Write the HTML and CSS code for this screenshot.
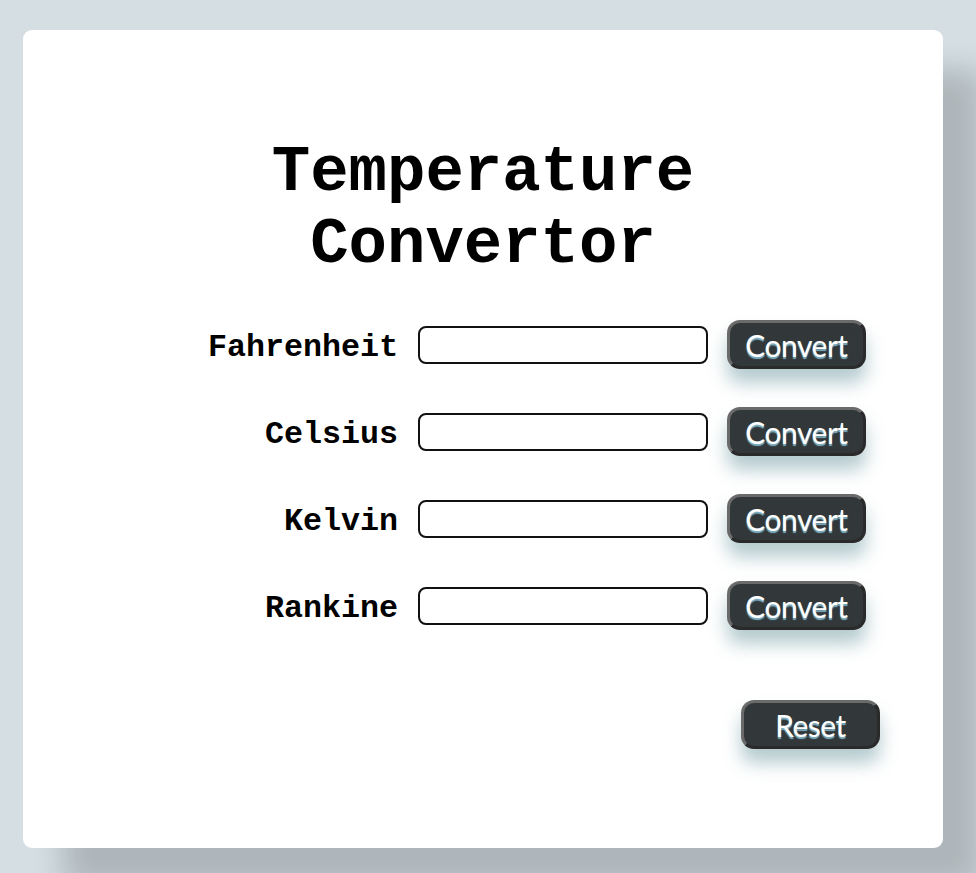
FILE: index.html
```html
<!DOCTYPE html>
<html>
<head>
<meta charset="utf-8">
<link rel="stylesheet" href="styles.css">
<title>Temperature Convertor</title>
</head>
<body>
<main class="card">
  <h1 class="title">Temperature<br>Convertor</h1>
  <form class="form">
    <div class="row">
      <label class="label" for="f">Fahrenheit</label>
      <input class="field" id="f" type="text">
      <button class="btn" type="button">Convert</button>
    </div>
    <div class="row">
      <label class="label" for="c">Celsius</label>
      <input class="field" id="c" type="text">
      <button class="btn" type="button">Convert</button>
    </div>
    <div class="row">
      <label class="label" for="k">Kelvin</label>
      <input class="field" id="k" type="text">
      <button class="btn" type="button">Convert</button>
    </div>
    <div class="row">
      <label class="label" for="r">Rankine</label>
      <input class="field" id="r" type="text">
      <button class="btn" type="button">Convert</button>
    </div>
  </form>
  <div class="actions">
    <button class="btn btn-reset" type="button">Reset</button>
  </div>
</main>
</body>
</html>
```
FILE: styles.css
```css
html, body {
  margin: 0;
  padding: 0;
  height: 100%;
}
body {
  background: #d4dee3;
  padding: 30px 33px 0 23px;
  box-sizing: border-box;
  overflow: hidden;
  font-family: "Liberation Mono", "Courier New", monospace;
}
.card {
  background: #fff;
  border-radius: 9px;
  height: 818px;
  box-sizing: border-box;
  padding-top: 107px;
  box-shadow: 40px 40px 30px rgba(0, 0, 0, 0.18);
}
.title {
  margin: 0;
  text-align: center;
  font-size: 64px;
  font-weight: bold;
  line-height: 72px;
  color: #000;
}
.form {
  display: flex;
  flex-direction: column;
  gap: 38px;
  padding-left: 185px;
  margin-top: 39px;
}
.row {
  display: flex;
  align-items: center;
  height: 49px;
}
.label {
  width: 190px;
  text-align: right;
  font-size: 31.7px;
  font-weight: bold;
  color: #000;
  margin-right: 20px;
  padding-top: 6px;
}
.field {
  width: 290px;
  height: 38px;
  box-sizing: border-box;
  border: 2px solid #111;
  border-radius: 8px;
  background: #fff;
  margin: 0 19px 0 0;
  padding: 0 6px;
}
.btn {
  width: 139px;
  height: 49px;
  box-sizing: border-box;
  background: #32383a;
  color: #fff;
  border: 3px solid;
  border-color: #6a6a6a #2a2a2a #2a2a2a #6a6a6a;
  border-radius: 13px;
  font-family: Lato, "Open Sans", sans-serif;
  font-size: 30px;
  letter-spacing: -0.5px;
  line-height: 1;
  padding: 0;
  text-shadow: 0 2px 1px #7fb1c4;
  box-shadow: 0 14px 18px rgba(70, 125, 135, 0.4);
}
.actions {
  display: flex;
  justify-content: flex-end;
  padding-right: 63px;
  margin-top: 70px;
}
```
